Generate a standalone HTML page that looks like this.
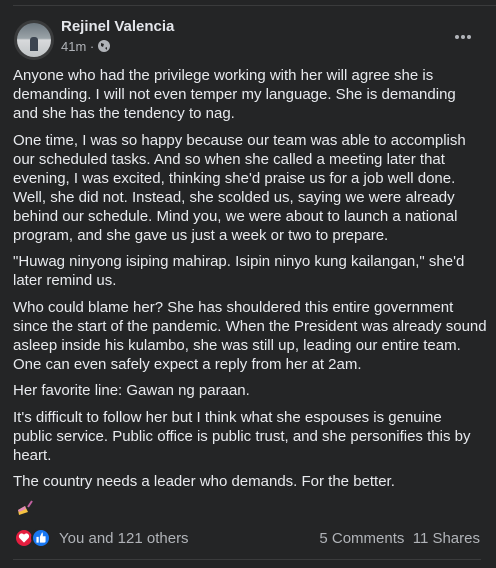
<!DOCTYPE html>
<html><head><meta charset="utf-8"><style>
*{margin:0;padding:0;box-sizing:border-box}
body{width:496px;height:568px;background:#242526;font-family:"Liberation Sans",sans-serif;color:#e4e6eb;position:relative;overflow:hidden}
.topline{position:absolute;left:13px;right:0;top:5px;height:1px;background:#3a3b3c}
.av{position:absolute;left:14px;top:20px;width:40px;height:40px;border-radius:50%;background:#3a3b3c;padding:3px}
.av div{width:34px;height:34px;border-radius:50%;background:linear-gradient(#6d7880 0%,#9aa3a8 45%,#d8dadc 50%,#c0c4c6 100%);position:relative;overflow:hidden}
.av div:after{content:"";position:absolute;left:13px;top:14px;width:8px;height:14px;background:#3b4450;border-radius:3px 3px 0 0}
.name{position:absolute;left:61px;top:18px;font-size:15px;font-weight:bold;color:#e4e6eb}
.meta{position:absolute;left:61px;top:39px;font-size:13px;color:#b0b3b8}
.dots{position:absolute;left:455px;top:35px;display:flex;gap:2px}
.dots i{display:block;width:4px;height:4px;border-radius:50%;background:#b0b3b8}
.txt{position:absolute;left:13px;top:66px;font-size:15px;line-height:19px;color:#e8eaee}
.txt p{margin-bottom:7.5px;white-space:nowrap}
.r{position:absolute;top:528px;width:20px;height:20px;border-radius:50%;border:2px solid #242526}
.rt{position:absolute;top:530px;font-size:15px;color:#b0b3b8}
.bot{position:absolute;left:13px;right:15px;top:559px;height:1px;background:#3a3b3c}
</style></head><body>
<div class="topline"></div>
<div class="av"><div></div></div>
<div class="name">Rejinel Valencia</div>
<div class="meta">41m · <svg width="12" height="12" viewBox="0 0 12 12" style="vertical-align:-1px"><circle cx="6" cy="6" r="6" fill="#b0b3b8"/><path d="M3 3 L6 4 L5 7 L3 6Z M7 8 L9 7 L9 10Z" fill="#242526"/></svg></div>
<div class="dots"><i></i><i></i><i></i></div>
<div class="txt">
<p>Anyone who had the privilege working with her will agree she is<br>demanding. I will not even temper my language. She is demanding<br>and she has the tendency to nag.</p>
<p>One time, I was so happy because our team was able to accomplish<br>our scheduled tasks. And so when she called a meeting later that<br>evening, I was excited, thinking she'd praise us for a job well done.<br>Well, she did not. Instead, she scolded us, saying we were already<br>behind our schedule. Mind you, we were about to launch a national<br>program, and she gave us just a week or two to prepare.</p>
<p>"Huwag ninyong isiping mahirap. Isipin ninyo kung kailangan," she'd<br>later remind us.</p>
<p>Who could blame her? She has shouldered this entire government<br>since the start of the pandemic. When the President was already sound<br>asleep inside his kulambo, she was still up, leading our entire team.<br>One can even safely expect a reply from her at 2am.</p>
<p>Her favorite line: Gawan ng paraan.</p>
<p>It's difficult to follow her but I think what she espouses is genuine<br>public service. Public office is public trust, and she personifies this by<br>heart.</p>
<p>The country needs a leader who demands. For the better.</p>
</div>
<div style="position:absolute;left:17px;top:500px;width:16px;height:16px">
<svg width="16" height="16" viewBox="0 0 16 16"><path d="M1 10 L8 6 L11 12 L2 15Z" fill="#f5c242"/><path d="M1 10 L8 6 L9 9 L2 12Z" fill="#e08ab8"/><path d="M11 7 L15 1" stroke="#c060a0" stroke-width="2"/></svg></div>
<div class="r" style="left:14px;background:#e41e3f"><svg width="16" height="16" viewBox="0 0 14 14"><path d="M7 11 L3 7 A2 2 0 0 1 7 4 A2 2 0 0 1 11 7Z" fill="#fff"/></svg></div>
<div class="r" style="left:31px;background:#1877f2"><svg width="16" height="16" viewBox="0 0 14 14"><path d="M3 6h2v5H3z M6 6 L8 2 Q9 3 8.5 5.5 H11 V10 Q11 11 10 11 H6Z" fill="#fff"/></svg></div>
<div class="rt" style="left:59px">You and 121 others</div>
<div class="rt" style="right:16px">5 Comments &nbsp;11 Shares</div>
<div class="bot"></div>
</body></html>
